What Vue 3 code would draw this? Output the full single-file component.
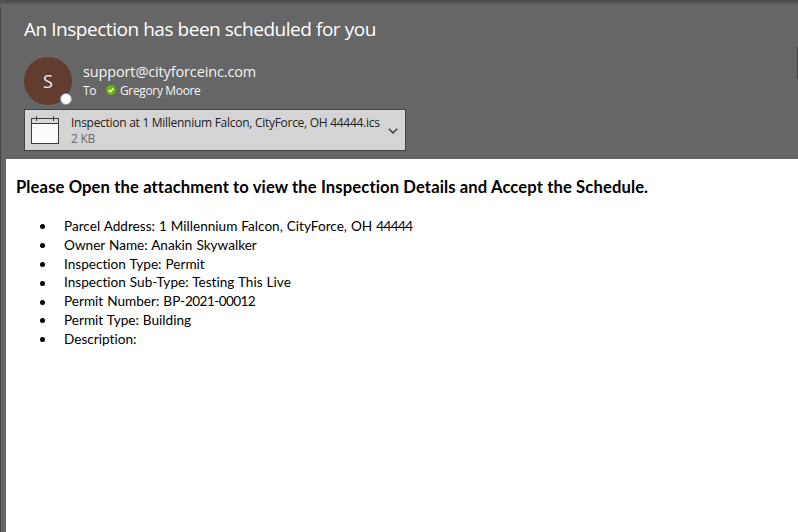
<script setup>
const mail = {
  subject: 'An Inspection has been scheduled for you',
  from: 'support@cityforceinc.com',
  to: 'Gregory Moore',
  heading: 'Please Open the attachment to view the Inspection Details and Accept the Schedule.'
}

const attachment = {
  name: 'Inspection at 1 Millennium Falcon, CityForce, OH 44444.ics',
  size: '2 KB'
}

const details = [
  { label: 'Parcel Address', value: '1 Millennium Falcon, CityForce, OH ', number: '44444' },
  { label: 'Owner Name', value: 'Anakin Skywalker' },
  { label: 'Inspection Type', value: 'Permit' },
  { label: 'Inspection Sub-Type', value: 'Testing This Live' },
  { label: 'Permit Number', value: 'BP-', number: '2021-00012' },
  { label: 'Permit Type', value: 'Building' },
  { label: 'Description', value: '' }
]
</script>

<template>
  <div class="reading-pane">
    <header class="mail-header">
      <div class="subject">{{ mail.subject }}</div>

      <div class="sender">
        <div class="avatar">
          S
          <span class="presence"></span>
        </div>
        <div class="sender-info">
          <div class="from">{{ mail.from }}</div>
          <div class="to-line">
            <span class="to-label">To</span>
            <svg class="status" width="10" height="10" viewBox="0 0 10 10">
              <circle cx="5" cy="5" r="5" fill="#6bb700" />
              <path d="M2.7 5.1 4.4 6.7 7.4 3.6" fill="none" stroke="#fff" stroke-width="1.5" />
            </svg>
            <span class="to-name">{{ mail.to }}</span>
          </div>
        </div>
      </div>

      <div class="attachment">
        <svg class="calendar" width="28" height="28" viewBox="0 0 28 28">
          <rect x="0.5" y="2.5" width="27" height="25" fill="#fbfbfb" stroke="#3b3b3b" />
          <path d="M1 3h26v4H1z" fill="#d9d9d9" />
          <path d="M0 7.5h28M5.5 0v5M22.5 0v5" fill="none" stroke="#3b3b3b" />
        </svg>
        <div class="file">
          <div class="file-name">{{ attachment.name }}</div>
          <div class="file-size">{{ attachment.size }}</div>
        </div>
        <svg class="chevron" width="10" height="6" viewBox="0 0 10 6">
          <path d="M0.7 0.8 5 4.9 9.3 0.8" fill="none" stroke="#444" stroke-width="1.5" />
        </svg>
      </div>
      <div class="scroll-edge"></div>
    </header>

    <main class="mail-body">
      <div class="heading">{{ mail.heading }}</div>
      <ul class="details">
        <li v-for="d in details" :key="d.label">
          <span class="detail-text">{{ d.label }}: {{ d.value }}<span v-if="d.number" class="number">{{ d.number }}</span></span>
        </li>
      </ul>
    </main>
  </div>
</template>

<style>
body {
  margin: 0;
  overflow: hidden;
}
</style>

<style scoped>
.reading-pane {
  box-sizing: border-box;
  width: 798px;
  height: 532px;
  display: flex;
  flex-direction: column;
  padding-left: 6px;
  /* top shadow first, left divider below it */
  background:
    linear-gradient(#4b4b4b, #4e4e4e 2px, #666 5px) 0 0 / 100% 5px no-repeat,
    linear-gradient(#444, #444) 0 7px / 1px 100% no-repeat,
    #666;
  font-family: "Open Sans", "Noto Sans", sans-serif;
  color: #fff;
  overflow: hidden;
}

.mail-header {
  position: relative;
  box-sizing: border-box;
  height: 159px;
  flex: none;
  padding: 16px 0 0 18px;
}

.subject {
  height: 26px;
  line-height: 26px;
  font-size: 19px;
  letter-spacing: -0.46px;
  white-space: nowrap;
}

.sender {
  display: flex;
  margin-top: 15px;
  height: 52px;
}

.avatar {
  position: relative;
  width: 48px;
  height: 48px;
  border-radius: 50%;
  background: #633c30;
  line-height: 49px;
  text-align: center;
  font-size: 18px;
  color: #f2ecea;
}

.presence {
  position: absolute;
  left: 36px;
  top: 36px;
  width: 10px;
  height: 10px;
  border: 1px solid #8298a0;
  border-radius: 50%;
  background: #fff;
}

.sender-info {
  padding: 5px 0 0 11px;
  white-space: nowrap;
}

.from {
  height: 20px;
  line-height: 20px;
  font-size: 14.5px;
  letter-spacing: -0.14px;
  color: #f5f5f5;
}

.to-line {
  display: flex;
  align-items: center;
  height: 17px;
  font-size: 12px;
  letter-spacing: -0.35px;
  color: #f5f5f5;
}

.to-label {
  width: 13px;
}

.status {
  margin: 0 4px 2px 10px;
}

.attachment {
  display: flex;
  box-sizing: border-box;
  width: 382px;
  height: 42px;
  border: 1px solid #444;
  background: #d4d4d4;
  color: #222;
}

.calendar {
  margin: 6px 0 0 6px;
}

.file {
  width: 310px;
  margin-left: 12px;
  padding-top: 5px;
  font-size: 12px;
  letter-spacing: -0.28px;
  line-height: 16px;
  white-space: nowrap;
}

.file-size {
  color: #6a6a6a;
}

.chevron {
  margin: 18px 0 0 7px;
}

.scroll-edge {
  position: absolute;
  right: 0;
  top: 47px;
  width: 1px;
  height: 32px;
  background: #444;
}

.mail-body {
  flex: 1;
  padding: 17px 0 0 10px;
  background: #fff;
  color: #000;
  font-family: Lato, "Open Sans", sans-serif;
  font-variant-ligatures: none;
}

.heading {
  height: 22px;
  line-height: 22px;
  font-size: 16.6px;
  font-weight: 700;
  letter-spacing: 0.12px;
  white-space: nowrap;
}

.details {
  margin: 19px 0 0;
  padding: 0;
  list-style: none;
  font-size: 13.6px;
  line-height: 18.8px;
  word-spacing: 0.5px;
}

.details li {
  display: flex;
  align-items: center;
  height: 18.8px;
  padding-left: 24px;
  white-space: nowrap;
}

.details li::before {
  content: "";
  width: 5px;
  height: 5px;
  margin: 1px 19px 0 0;
  border-radius: 50%;
  background: #000;
}

.number {
  letter-spacing: -0.6px;
}
</style>
